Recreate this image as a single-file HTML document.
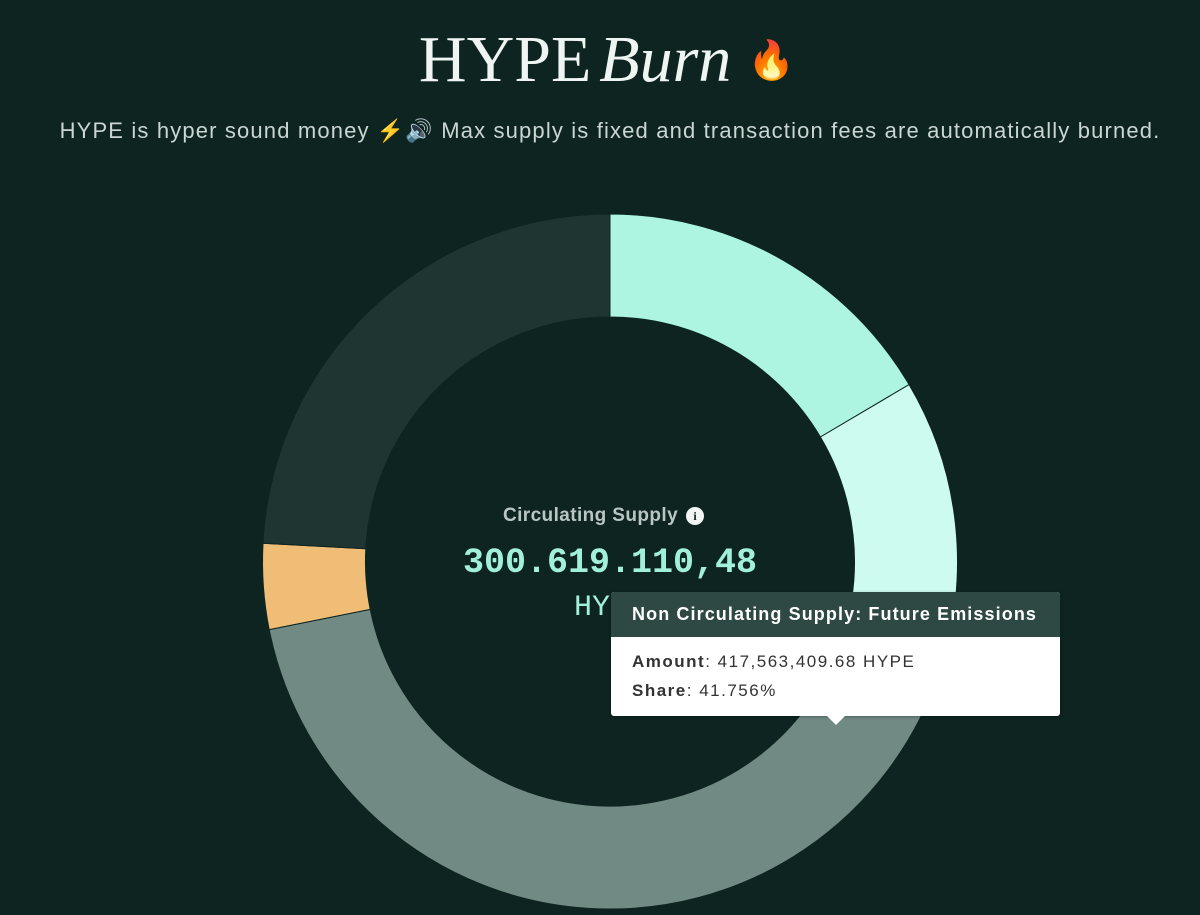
<!DOCTYPE html>
<html><head><meta charset="utf-8">
<style>
html,body{margin:0;padding:0;width:1200px;height:915px;overflow:hidden;background:#0e2420;}
.title{position:absolute;top:20px;left:0;width:1200px;text-align:center;font-family:"Liberation Serif",serif;color:#eef5f3;font-size:66px;line-height:80px;white-space:nowrap;padding-left:14px;box-sizing:border-box;}
.title i{font-style:italic;margin-left:8px;}
.title .f{font-size:38px;vertical-align:8px;}
.sub{position:absolute;top:117px;left:0;width:1200px;text-align:center;font-family:"Liberation Sans",sans-serif;color:#c9d6d3;font-size:22px;letter-spacing:1.15px;line-height:28px;white-space:nowrap;padding-left:20px;box-sizing:border-box;}
svg{position:absolute;left:0;top:0;}
.cs{position:absolute;top:504px;left:503px;font-family:"Liberation Sans",sans-serif;font-weight:bold;color:#b9c6c3;font-size:19px;letter-spacing:0.4px;line-height:24px;white-space:nowrap;}
.info{display:inline-block;width:18px;height:18px;border-radius:50%;background:#f2f5f4;color:#0e2420;font-size:12px;line-height:18px;text-align:center;font-family:"Liberation Serif",serif;font-weight:bold;margin-left:8px;vertical-align:1px;letter-spacing:0;}
.num{position:absolute;top:541px;left:0;width:1220px;text-align:center;font-family:"Liberation Mono",monospace;font-weight:bold;color:#a3f0da;font-size:35px;line-height:44px;}
.hype{position:absolute;top:590px;left:574px;font-family:"Liberation Mono",monospace;color:#a3f0da;font-size:30px;line-height:36px;}
.tt{position:absolute;left:611px;top:592px;width:449px;height:124px;background:#fff;border-radius:3px;font-family:"Liberation Sans",sans-serif;box-shadow:0 1px 3px rgba(0,0,0,.3);}
.tt .h{background:#2e4843;color:#fff;font-weight:bold;font-size:18px;letter-spacing:1.1px;height:45px;line-height:45px;padding-left:21px;border-radius:3px 3px 0 0;white-space:nowrap;}
.tt .b{padding:10px 21px;color:#333;font-size:17px;letter-spacing:1.5px;line-height:29px;white-space:nowrap;}
.tt .b b{color:#333;}
.arrow{position:absolute;left:827px;top:716px;width:0;height:0;border-left:9px solid transparent;border-right:9px solid transparent;border-top:9px solid #fff;}
</style></head><body>
<div class="title">HYPE<i>Burn</i> <span class="f">🔥</span></div>
<div class="sub">HYPE is hyper sound money ⚡🔊 Max supply is fixed and transaction fees are automatically burned.</div>
<svg width="1200" height="915" viewBox="0 0 1200 915">
<g stroke="#0e2420" stroke-width="1">
<path d="M610 214 A347.5 347.5 0 0 1 909.1 384.6 L820.4 437 A244.5 244.5 0 0 0 610 317 Z" fill="#adf5e1"/>
<path d="M909.1 384.6 A347.5 347.5 0 0 1 939.7 671.2 L842 638.7 A244.5 244.5 0 0 0 820.4 437 Z" fill="#cdfbef"/>
<path d="M939.7 671.2 A347.5 347.5 0 0 1 269.2 629.6 L370.2 609.4 A244.5 244.5 0 0 0 842 638.7 Z" fill="#728a84"/>
<path d="M269.2 629.6 A347.5 347.5 0 0 1 263 543.3 L365.8 548.7 A244.5 244.5 0 0 0 370.2 609.4 Z" fill="#efbd76"/>
<path d="M263 543.3 A347.5 347.5 0 0 1 610 214 L610 317 A244.5 244.5 0 0 0 365.8 548.7 Z" fill="#1e3532"/>
</g>
</svg>
<div class="cs">Circulating Supply<span class="info">i</span></div>
<div class="num">300.619.110,48</div>
<div class="hype">HYPE</div>
<div class="tt"><div class="h">Non Circulating Supply: Future Emissions</div>
<div class="b"><b>Amount</b>: 417,563,409.68 HYPE<br><b>Share</b>: 41.756%</div></div>
<div class="arrow"></div>
</body></html>
